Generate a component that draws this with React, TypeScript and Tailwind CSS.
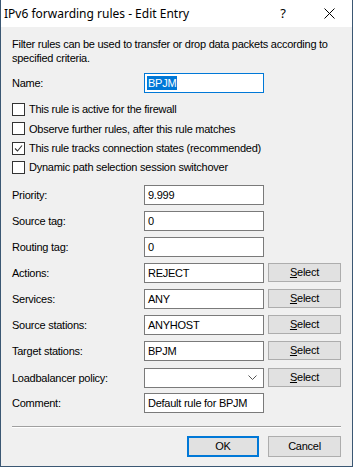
export default function App() {
  const rows = [
    { label: "Priority:", value: "9.999" },
    { label: "Source tag:", value: "0" },
    { label: "Routing tag:", value: "0" },
    { label: "Actions:", value: "REJECT", select: true },
    { label: "Services:", value: "ANY", select: true },
    { label: "Source stations:", value: "ANYHOST", select: true },
    { label: "Target stations:", value: "BPJM", select: true },
  ];

  const checks = [
    { label: "This rule is active for the firewall", on: false },
    { label: "Observe further rules, after this rule matches", on: false },
    { label: "This rule tracks connection states (recommended)", on: true },
    { label: "Dynamic path selection session switchover", on: false },
  ];

  const SelectBtn = () => (
    <button className="ml-[4px] w-[73px] h-[19px] bg-[#e1e1e1] border border-[#adadad] text-black leading-none">
      <span className="underline">S</span>elect
    </button>
  );

  return (
    <div className="w-[353px] h-[467px] bg-[#f0f0f0] border-x border-b border-[#3b5773] flex flex-col text-[11px] tracking-[-0.25px] whitespace-nowrap text-black font-['Liberation_Sans',Arial,sans-serif]">
      {/* title bar */}
      <div className="h-[27px] bg-white flex items-center pl-[3px] shrink-0 tracking-normal">
        <span className="text-[12px] font-['Noto_Sans',sans-serif] flex-1">
          IPv6 forwarding rules - Edit Entry
        </span>
        <span className="text-[13px] font-['Noto_Sans',sans-serif] w-[46px] text-center">?</span>
        <div className="w-[46px] h-[27px] flex items-center justify-center">
          <svg width="11" height="11" viewBox="0 0 11 11">
            <path d="M0.5 0.5 L10.5 10.5 M10.5 0.5 L0.5 10.5" stroke="#000" strokeWidth="1" />
          </svg>
        </div>
      </div>

      <div className="px-[11px] pt-[10px] flex flex-col">
        <p className="leading-[14px]">
          Filter rules can be used to transfer or drop data packets according to
          <br />
          specified criteria.
        </p>

        {/* name */}
        <div className="flex items-center mt-[8px]">
          <span className="w-[132px]">Name:</span>
          <div className="w-[120px] h-[20px] bg-white border border-[#0078d7] flex items-center px-[2px]">
            <span className="bg-[#0078d7] text-white leading-[14px] px-[1px]">BPJM</span>
          </div>
        </div>

        {/* checkboxes */}
        <div className="flex flex-col mt-[10px] gap-[6.3px]">
          {checks.map((c) => (
            <label key={c.label} className="flex items-center h-[13px]">
              <span className="w-[13px] h-[13px] border border-[#333] bg-white flex items-center justify-center mr-[4px]">
                {c.on && (
                  <svg width="9" height="9" viewBox="0 0 9 9">
                    <path d="M1 4.5 L3.5 7 L8 1.5" stroke="#333" strokeWidth="1.1" fill="none" />
                  </svg>
                )}
              </span>
              {c.label}
            </label>
          ))}
        </div>

        {/* fields */}
        <div className="flex flex-col mt-[11px] gap-[6px]">
          {rows.map((r) => (
            <div key={r.label} className="flex items-center h-[20px]">
              <span className="w-[132px]">{r.label}</span>
              <div className="w-[120px] h-[20px] bg-white border border-[#7a7a7a] flex items-center px-[3px]">
                {r.value}
              </div>
              {r.select && <SelectBtn />}
            </div>
          ))}
          <div className="flex items-center h-[20px] mt-[1px]">
            <span className="w-[132px]">Loadbalancer policy:</span>
            <div className="w-[120px] h-[20px] bg-white border border-[#7a7a7a] flex items-center justify-end pr-[6px]">
              <svg width="9" height="5" viewBox="0 0 9 5">
                <path d="M0.5 0.5 L4.5 4.5 L8.5 0.5" stroke="#555" strokeWidth="1" fill="none" />
              </svg>
            </div>
            <SelectBtn />
          </div>
          <div className="flex items-center h-[20px] -mt-[1px]">
            <span className="w-[132px]">Comment:</span>
            <div className="w-[120px] h-[20px] bg-white border border-[#7a7a7a] flex items-center px-[3px]">
              Default rule for BPJM
            </div>
          </div>
        </div>

        {/* separator */}
        <div className="mt-[13px] w-[329px] border-t border-[#a0a0a0] border-b-white border-b h-0" />

        <div className="flex justify-end mt-[8px] w-[329px]">
          <button className="w-[72px] h-[21px] bg-[#e1e1e1] border-2 border-[#0078d7] leading-none">
            OK
          </button>
          <button className="ml-[9px] w-[73px] h-[21px] bg-[#e1e1e1] border border-[#adadad] leading-none">
            Cancel
          </button>
        </div>
      </div>
    </div>
  );
}
